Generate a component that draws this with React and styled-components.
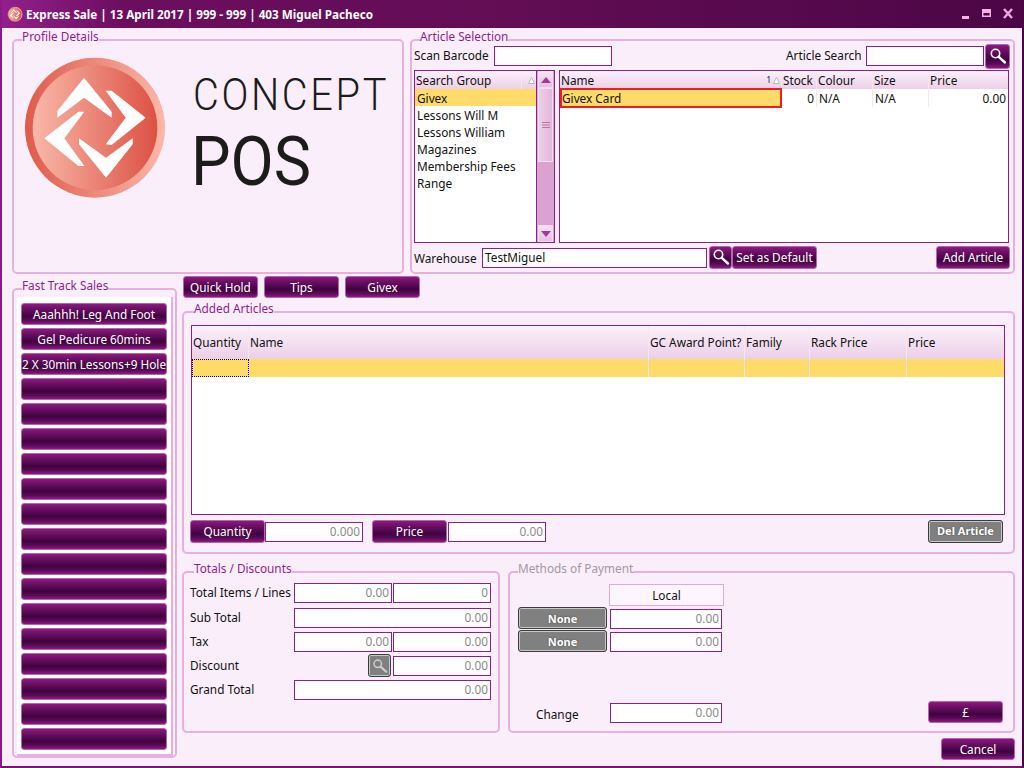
import React from "react";
import styled, { createGlobalStyle, css } from "styled-components";

const GlobalStyle = createGlobalStyle`
    html, body {
        margin: 0;
        padding: 0;
        background: #faeefa;
    }
    * {
        box-sizing: border-box;
    }
`;

const Window = styled.div`
    width: 1024px;
    height: 768px;
    overflow: hidden;
    display: flex;
    flex-direction: column;
    background: #faeefa;
    border-left: 2px solid #8c1a86;
    border-right: 2px solid #4a0545;
    border-bottom: 2px solid #7a1472;
    font-family: "Noto Sans", "Liberation Sans", sans-serif;
    font-size: 11.8px;
    color: #111;
`;

const TitleBar = styled.div`
    height: 28px;
    flex: none;
    margin: 0 -2px;
    padding: 0 11px 0 7px;
    display: flex;
    align-items: center;
    gap: 3px;
    color: #fff;
    font-weight: 700;
    font-size: 11.7px;
    background: linear-gradient(90deg, #93208c 0, #6c0e60 12%, #620d54 50%, #4c0646 100%);
`;

const TitleText = styled.span`
    flex: 1;
    white-space: pre;
`;

const WindowControls = styled.div`
    display: flex;
    align-items: center;
    gap: 12px;
`;

const Content = styled.div`
    flex: 1;
    padding: 11px 7px 0 10px;
    display: flex;
    flex-direction: column;
`;

const TopRow = styled.div`
    display: flex;
    gap: 6px;
    height: 235px;
`;

const BottomRow = styled.div`
    display: flex;
    gap: 5px;
    margin-top: 2px;
`;

const Panel = styled.section`
    position: relative;
    border: 2px solid #e8b0de;
    border-radius: 5px;
    width: ${p => p.$w}px;
    height: ${p => p.$h ? `${p.$h}px` : "auto"};
    flex: none;
`;

const Legend = styled.span`
    position: absolute;
    top: -13px;
    left: ${p => p.$l || 8}px;
    background: #faeefa;
    line-height: 16px;
    color: ${p => p.$disabled ? "#a596a5" : "#8e1e8e"};
    white-space: pre;
`;

const ProfileBody = styled.div`
    padding: 9px 0 0 6px;
`;

const LogoRow = styled.div`
    display: flex;
`;

const ArticleBody = styled.div`
    padding: 5px 3px 0 2px;
    display: flex;
    flex-direction: column;
`;

const Bar = styled.div`
    display: flex;
    align-items: center;
    height: ${p => p.$h || 20}px;
    margin-top: ${p => p.$mt || 0}px;
`;

const Label = styled.span`
    width: ${p => p.$w ? `${p.$w}px` : "auto"};
    flex: none;
    padding-left: ${p => p.$pl || 0}px;
    line-height: 20px;
    margin-top: ${p => p.$dy ?? -1}px;
    white-space: pre;
`;

const ChangeLabel = styled(Label)`
    margin-bottom: -1px;
`;

const Spacer = styled.div`
    flex: 1;
`;

const Input = styled.div`
    width: ${p => p.$w ? `${p.$w}px` : "auto"};
    height: 20px;
    flex: ${p => p.$w ? "none" : 1};
    margin-left: ${p => p.$ml || 0}px;
    border: 1px solid #8e1e8e;
    background: #fff;
    line-height: 17px;
    padding: 0 2px;
    text-align: ${p => p.$left ? "left" : "right"};
    color: ${p => p.$left ? "#111" : "#8a8a8a"};
    white-space: pre;
`;

const Button = styled.button`
    width: ${p => p.$w || 75}px;
    height: ${p => p.$h || 23}px;
    flex: none;
    margin: ${p => p.$m || 0};
    padding: 0 0 ${p => p.$h ? 0 : 2}px;
    display: flex;
    align-items: center;
    justify-content: center;
    border-radius: 3px;
    font: inherit;
    white-space: pre;
    overflow: hidden;
    ${p => p.$gray ? css`
        border: 1px solid #3c3c3c;
        box-shadow: inset 0 0 0 1px #c8c8c8;
        background: #808080;
        color: #fff;
        font-weight: 700;
        font-size: 11px;
        text-shadow: 0 0 2px #444;
    ` : css`
        border: 1px solid #b565ab;
        background: linear-gradient(180deg, #8c1a80 0, #6b0f63 25%, #3f0340 62%, #5c0b57 82%, #8c1a80 100%);
        color: #fff;
    `}
`;

const Lists = styled.div`
    display: flex;
    gap: 4px;
    margin-top: 4px;
    height: 173px;
`;

const Box = styled.div`
    width: ${p => p.$w}px;
    height: ${p => p.$h ? `${p.$h}px` : "auto"};
    flex: none;
    display: flex;
    border: 1px solid #8e1e8e;
    background: #fff;
    margin: ${p => p.$m || 0};
`;

const Column = styled.div`
    flex: 1;
    min-width: 0;
`;

const HeadCell = styled.div`
    display: flex;
    align-items: center;
    gap: 1px;
    padding-left: 1px;
    border-right: 1px solid #f6e6f4;
    white-space: pre;
    &:last-child {
        border-right: 0;
    }
`;

const Head = styled.div`
    display: grid;
    grid-template-columns: ${p => p.$cols};
    height: ${p => p.$h || 18}px;
    background: linear-gradient(180deg, #fbf1fa 0, #eccfe8 100%);
    ${HeadCell} {
        padding-bottom: ${p => p.$pb || 0}px;
    }
`;

const SortMark = styled.div`
    margin-left: auto;
    display: flex;
    align-items: center;
    gap: 2px;
    padding-right: 1px;
    font-size: 8px;
    line-height: 10px;
`;

const Row = styled.div`
    display: grid;
    grid-template-columns: ${p => p.$cols};
    height: 18px;
    background: ${p => p.$active ? "#ffdb69" : "transparent"};
`;

const Cell = styled.div`
    padding: 0 2px;
    line-height: 18px;
    text-align: ${p => p.$right ? "right" : "left"};
    border-right: 1px solid #f6e6f4;
    white-space: pre;
    &:last-child {
        border-right: 0;
    }
`;

const PickedCell = styled(Cell)`
    margin: -1px 0;
    height: 20px;
    border: 2px solid #ee1c25;
    padding: 0;
    line-height: 16px;
    background: #ffdb69;
    position: relative;
`;

const FocusCell = styled(Cell)`
    border: 1px dotted #111;
`;

const GroupItem = styled.div`
    height: 17px;
    line-height: 15px;
    padding: 2px 0 0 2px;
    background: ${p => p.$active ? "#ffdb69" : "transparent"};
`;

const ScrollBar = styled.div`
    width: 18px;
    flex: none;
    padding: 0 1px;
    display: flex;
    flex-direction: column;
    background: #d9a2d1;
    border-left: 1px solid #8e1e8e;
`;

const ScrollButton = styled.div`
    height: 17px;
    flex: none;
    display: flex;
    align-items: center;
    justify-content: center;
    background: linear-gradient(180deg, #f6e3f3, #e6bfdf);
    border: 1px solid #f3dcef;
`;

const ScrollThumb = styled.div`
    height: 74px;
    flex: none;
    display: flex;
    align-items: center;
    justify-content: center;
    background: linear-gradient(90deg, #ecd0e7, #e2b7da);
    border: 1px solid #f3dcef;
`;

const FastPanel = styled(Panel)`
    margin-top: 12px;
    padding: 7px 2px 2px 3px;
`;

const FastList = styled.div`
    background: #fff;
    border-right: 2px solid #e8b0de;
    border-bottom: 2px solid #e8b0de;
    padding: 6px 4px 4px 4px;
    display: flex;
    flex-direction: column;
    gap: 3px;
`;

const RightColumn = styled.div`
    width: 833px;
    flex: none;
    display: flex;
    flex-direction: column;
`;

const QuickBar = styled.div`
    display: flex;
    gap: 6px;
    padding-left: 1px;
    height: 23px;
    margin-bottom: 12px;
`;

const AddedBody = styled.div`
    padding: 12px 8px 0 6px;
`;

const TotalsRow = styled.div`
    display: flex;
    gap: 8px;
    margin-top: 17px;
`;

const TotalsGrid = styled.div`
    padding: 10px 6px 0 6px;
    display: grid;
    grid-template-columns: 103px 98px 98px;
    grid-template-rows: 21px repeat(4, 20px);
    row-gap: 4px;
    column-gap: 1px;
    align-items: start;
`;

const WideInput = styled(Input)`
    grid-column: span 2;
`;

const IconCell = styled.div`
    display: flex;
    justify-content: flex-end;
    padding-right: 1px;
    margin-top: -2px;
`;

const PayBody = styled.div`
    padding: 11px 8px 0 8px;
    display: flex;
    flex-direction: column;
    height: 100%;
`;

const LocalHead = styled.div`
    width: 115px;
    height: 22px;
    margin-left: 91px;
    border: 1px solid #e8a6da;
    background: #fdf6fc;
    text-align: center;
    line-height: 20px;
`;

const PayRow = styled.div`
    display: flex;
    align-items: flex-end;
    height: 23px;
`;

const ChangeRow = styled.div`
    display: flex;
    align-items: flex-end;
    margin-top: 47px;
    height: 24px;
`;

const Footer = styled.div`
    display: flex;
    justify-content: flex-end;
    margin-top: 5px;
`;

const LogoMark = ({ size }) => (
    <svg width={size} height={size} viewBox="0 0 450 450">
        <defs>
            <linearGradient id={`outer${size}`} x1="0" x2="1" y1="0" y2="0">
                <stop offset="0" stopColor="#df5a4c" />
                <stop offset="1" stopColor="#fab8a8" />
            </linearGradient>
            <linearGradient id={`inner${size}`} x1="0" x2="1" y1="0" y2="0">
                <stop offset="0" stopColor="#f9b8a8" />
                <stop offset="1" stopColor="#dc5144" />
            </linearGradient>
        </defs>
        <circle cx="225" cy="233" r="210" fill={`url(#outer${size})`} />
        <circle cx="225" cy="233" r="187" fill={`url(#inner${size})`} />
        <g fill="#fff">
            <polygon points="192,83 275,185 275,203 192,143 112,203 112,183" />
            <polygon points="257,122 275,122 377,203 275,285 257,283 317,203" />
            <polygon points="258,383 177,283 177,265 258,323 338,265 338,283" />
            <polygon points="73,265 175,185 193,185 133,265 193,348 175,348" />
        </g>
    </svg>
);

const LogoText = () => (
    <svg width="230" height="160" viewBox="0 0 230 160">
        <text x="23" y="60" fontFamily="Roboto, sans-serif" fontWeight="300" fontSize="45" letterSpacing="3" fill="#1c1c1a" textLength="196" lengthAdjust="spacingAndGlyphs">CONCEPT</text>
        <text x="21" y="135" fontFamily="Roboto, sans-serif" fontWeight="400" fontSize="68" fill="#1c1c1a" textLength="120" lengthAdjust="spacingAndGlyphs">POS</text>
    </svg>
);

const SearchIcon = ({ color = "#fff", size = 18 }) => (
    <svg width={size} height={size} viewBox="0 0 18 18" fill="none">
        <circle cx="6.5" cy="6.5" r="4.2" stroke={color} strokeWidth="1.6" />
        <path d="M9.8 9.8 L16 15.5" stroke={color} strokeWidth="2.4" strokeLinecap="round" />
    </svg>
);

const MinIcon = () => (
    <svg width="9" height="20" viewBox="0 0 9 20"><rect x="1" y="12" width="7" height="3" fill="#f3b4e4" /></svg>
);

const MaxIcon = () => (
    <svg width="9" height="20" viewBox="0 0 9 20">
        <path d="M0 5h9v8H0z M1.5 9v2.5h6V9z" fill="#f3b4e4" fillRule="evenodd" />
    </svg>
);

const CloseIcon = () => (
    <svg width="10" height="20" viewBox="0 0 10 20">
        <path d="M1 5l8 9M9 5l-8 9" stroke="#f0a8de" strokeWidth="2.4" />
    </svg>
);

const Triangle = ({ down }) => (
    <svg width="10" height="6" viewBox="0 0 10 6">
        <polygon points={down ? "0,0 10,0 5,6" : "0,6 10,6 5,0"} fill="#a33a9a" />
    </svg>
);

const SortTriangle = () => (
    <svg width="7" height="7" viewBox="0 0 7 7" fill="none">
        <polygon points="0.5,6.5 6.5,6.5 3.5,0.5" stroke="#bbb" fill="#fff" />
    </svg>
);

const Grip = () => (
    <svg width="8" height="7" viewBox="0 0 8 7">
        <path d="M0 .5h8M0 3h8M0 5.5h8" stroke="#b27aa8" />
    </svg>
);

const groups = ["Lessons Will M", "Lessons William", "Magazines", "Membership Fees", "Range"];
const articleCols = "222px 35px 56px 56px 1fr";
const addedCols = "57px 400px 96px 65px 97px 1fr";
const fastTrack = ["Aaahhh! Leg And Foot", "Gel Pedicure 60mins", "2 X 30min Lessons+9 Hole", ...Array(15).fill("")];

export default function App() {
    return (
        <Window>
            <GlobalStyle />
            <TitleBar>
                <LogoMark size={16} />
                <TitleText>Express Sale | 13 April 2017 | 999 - 999 | 403 Miguel Pacheco</TitleText>
                <WindowControls>
                    <MinIcon />
                    <MaxIcon />
                    <CloseIcon />
                </WindowControls>
            </TitleBar>
            <Content>
                <TopRow>
                    <Panel $w={392}>
                        <Legend>Profile Details</Legend>
                        <ProfileBody>
                            <LogoRow>
                                <LogoMark size={150} />
                                <LogoText />
                            </LogoRow>
                        </ProfileBody>
                    </Panel>
                    <Panel $w={605}>
                        <Legend>Article Selection</Legend>
                        <ArticleBody>
                            <Bar>
                                <Label $w={80} $dy={-3}>Scan Barcode</Label>
                                <Input $w={118} />
                                <Spacer />
                                <Label $w={80} $dy={-3}>Article Search</Label>
                                <Input $w={118} />
                                <Button $w={25} $h={25} $m="0 0 0 1px"><SearchIcon /></Button>
                            </Bar>
                            <Lists>
                                <Box $w={141}>
                                    <Column>
                                        <Head $cols="107px 1fr">
                                            <HeadCell>Search Group</HeadCell>
                                            <HeadCell><SortMark><SortTriangle /></SortMark></HeadCell>
                                        </Head>
                                        <GroupItem $active>Givex</GroupItem>
                                        {groups.map(name => <GroupItem key={name}>{name}</GroupItem>)}
                                    </Column>
                                    <ScrollBar>
                                        <ScrollButton><Triangle /></ScrollButton>
                                        <ScrollThumb><Grip /></ScrollThumb>
                                        <Spacer />
                                        <ScrollButton><Triangle down /></ScrollButton>
                                    </ScrollBar>
                                </Box>
                                <Box $w={450}>
                                    <Column>
                                        <Head $cols={articleCols}>
                                            <HeadCell>Name<SortMark>1<SortTriangle /></SortMark></HeadCell>
                                            <HeadCell>Stock</HeadCell>
                                            <HeadCell>Colour</HeadCell>
                                            <HeadCell>Size</HeadCell>
                                            <HeadCell>Price</HeadCell>
                                        </Head>
                                        <Row $cols={articleCols}>
                                            <PickedCell>Givex Card</PickedCell>
                                            <Cell $right>0</Cell>
                                            <Cell>N/A</Cell>
                                            <Cell>N/A</Cell>
                                            <Cell $right>0.00</Cell>
                                        </Row>
                                    </Column>
                                </Box>
                            </Lists>
                            <Bar $h={23} $mt={3}>
                                <Label $w={68} $dy={0}>Warehouse</Label>
                                <Input $w={225} $left>TestMiguel</Input>
                                <Button $w={23} $m="0 0 0 2px"><SearchIcon /></Button>
                                <Button $w={85}>Set as Default</Button>
                                <Spacer />
                                <Button $w={74}>Add Article</Button>
                            </Bar>
                        </ArticleBody>
                    </Panel>
                </TopRow>
                <BottomRow>
                    <FastPanel $w={165} $h={470}>
                        <Legend>Fast Track Sales</Legend>
                        <FastList>
                            {fastTrack.map((name, i) => <Button key={i} $w={146} $h={22}>{name}</Button>)}
                        </FastList>
                    </FastPanel>
                    <RightColumn>
                        <QuickBar>
                            <Button $h={22}>Quick Hold</Button>
                            <Button $h={22}>Tips</Button>
                            <Button $h={22}>Givex</Button>
                        </QuickBar>
                        <Panel $w={833} $h={243}>
                            <Legend $l={10}>Added Articles</Legend>
                            <AddedBody>
                                <Box $w={814} $h={190} $m="0 0 0 1px">
                                    <Column>
                                        <Head $cols={addedCols} $h={33} $pb={2}>
                                            <HeadCell>Quantity</HeadCell>
                                            <HeadCell>Name</HeadCell>
                                            <HeadCell>GC Award Point?</HeadCell>
                                            <HeadCell>Family</HeadCell>
                                            <HeadCell>Rack Price</HeadCell>
                                            <HeadCell>Price</HeadCell>
                                        </Head>
                                        <Row $cols={addedCols} $active>
                                            <FocusCell />
                                            <Cell />
                                            <Cell />
                                            <Cell />
                                            <Cell />
                                            <Cell />
                                        </Row>
                                    </Column>
                                </Box>
                                <Bar $h={23} $mt={5}>
                                    <Button>Quantity</Button>
                                    <Input $w={98}>0.000</Input>
                                    <Button $m="0 0 0 9px">Price</Button>
                                    <Input $w={98} $ml={1}>0.00</Input>
                                    <Spacer />
                                    <Button $gray $m="0 2px 0 0">Del Article</Button>
                                </Bar>
                            </AddedBody>
                        </Panel>
                        <TotalsRow>
                            <Panel $w={318} $h={162}>
                                <Legend $l={10}>Totals / Discounts</Legend>
                                <TotalsGrid>
                                    <Label>Total Items / Lines</Label>
                                    <Input>0.00</Input>
                                    <Input>0</Input>
                                    <Label>Sub Total</Label>
                                    <WideInput>0.00</WideInput>
                                    <Label>Tax</Label>
                                    <Input>0.00</Input>
                                    <Input>0.00</Input>
                                    <Label>Discount</Label>
                                    <IconCell>
                                        <Button $gray $w={23} $h={23}><SearchIcon color="#cfcfcf" size={16} /></Button>
                                    </IconCell>
                                    <Input>0.00</Input>
                                    <Label>Grand Total</Label>
                                    <WideInput>0.00</WideInput>
                                </TotalsGrid>
                            </Panel>
                            <Panel $w={507} $h={162}>
                                <Legend $disabled>Methods of Payment</Legend>
                                <PayBody>
                                    <LocalHead>Local</LocalHead>
                                    <PayRow>
                                        <Button $gray $w={89} $h={22}>None</Button>
                                        <Input $w={112} $ml={3}>0.00</Input>
                                    </PayRow>
                                    <PayRow>
                                        <Button $gray $w={89} $h={22}>None</Button>
                                        <Input $w={112} $ml={3}>0.00</Input>
                                    </PayRow>
                                    <ChangeRow>
                                        <ChangeLabel $w={92} $pl={18} $dy={0}>Change</ChangeLabel>
                                        <Input $w={112}>0.00</Input>
                                        <Spacer />
                                        <Button $h={22} $m="0 2px 0 0">£</Button>
                                    </ChangeRow>
                                </PayBody>
                            </Panel>
                        </TotalsRow>
                        <Footer>
                            <Button $w={74} $h={22}>Cancel</Button>
                        </Footer>
                    </RightColumn>
                </BottomRow>
            </Content>
        </Window>
    );
}
